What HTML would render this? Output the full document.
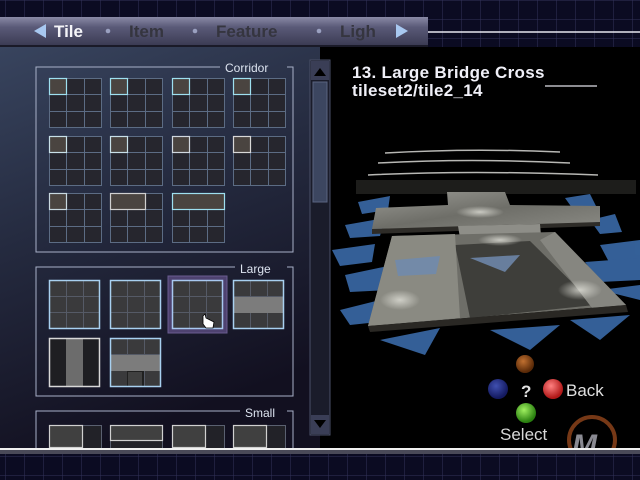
<!DOCTYPE html>
<html><head><meta charset="utf-8"><style>
html,body{margin:0;padding:0;background:#000;width:640px;height:480px;overflow:hidden}
svg{display:block}
text{font-family:"Liberation Sans",sans-serif}
</style></head><body>
<svg width="640" height="480" viewBox="0 0 640 480" xmlns="http://www.w3.org/2000/svg">
<defs>
<pattern id="grid" width="19" height="19" patternUnits="userSpaceOnUse" x="5" y="0">
<rect width="19" height="19" fill="#0b0b22"/>
<path d="M0 0V19M0 0H19" stroke="#33335a" stroke-width="1"/>
</pattern>
<linearGradient id="tab" x1="0" y1="0" x2="0" y2="1">
<stop offset="0" stop-color="#8a8aa6"/><stop offset="0.35" stop-color="#5a5a78"/><stop offset="1" stop-color="#3a3a52"/>
</linearGradient>
<linearGradient id="panel" x1="0" y1="0" x2="0.3" y2="1">
<stop offset="0" stop-color="#38445e"/><stop offset="0.45" stop-color="#252b40"/><stop offset="1" stop-color="#121020"/>
</linearGradient>
<linearGradient id="slab" x1="0" y1="0" x2="1" y2="1">
<stop offset="0" stop-color="#9a9a94"/><stop offset="0.5" stop-color="#6e6e68"/><stop offset="1" stop-color="#8a8a84"/>
</linearGradient>
<radialGradient id="spot" cx="0.5" cy="0.5" r="0.5"><stop offset="0" stop-color="#e0e0d8" stop-opacity="0.8"/><stop offset="1" stop-color="#e0e0d8" stop-opacity="0"/></radialGradient>
<radialGradient id="rb" cx="0.4" cy="0.35" r="0.6"><stop offset="0" stop-color="#ff8080"/><stop offset="1" stop-color="#b01818"/></radialGradient>
<radialGradient id="gb" cx="0.4" cy="0.35" r="0.6"><stop offset="0" stop-color="#a0f060"/><stop offset="1" stop-color="#2a8010"/></radialGradient>
<radialGradient id="bb" cx="0.4" cy="0.35" r="0.6"><stop offset="0" stop-color="#4050b0"/><stop offset="1" stop-color="#141a60"/></radialGradient>
<radialGradient id="ob" cx="0.4" cy="0.35" r="0.6"><stop offset="0" stop-color="#c07030"/><stop offset="1" stop-color="#5a2a08"/></radialGradient>
</defs>

<rect x="0" y="0" width="640" height="17" fill="url(#grid)"/>
<rect x="428" y="17" width="212" height="30" fill="url(#grid)"/>
<line x1="428" y1="32" x2="640" y2="32" stroke="#e8e8f0" stroke-width="1.5"/>
<rect x="0" y="17" width="428" height="29" fill="url(#tab)"/>
<rect x="0" y="45" width="428" height="2" fill="#1a1a28"/>
<polygon points="34,31 46,24 46,38" fill="#a8c8f0"/>
<text x="54" y="37" font-size="17" font-weight="bold" fill="#f4f4f8">Tile</text>
<circle cx="108" cy="31" r="2.3" fill="#9aa0c0"/>
<text x="129" y="37" font-size="17" font-weight="bold" fill="#35353f">Item</text>
<circle cx="195" cy="31" r="2.3" fill="#9aa0c0"/>
<text x="216" y="37" font-size="17" font-weight="bold" fill="#35353f">Feature</text>
<circle cx="319" cy="31" r="2.3" fill="#9aa0c0"/>
<text x="340" y="37" font-size="17" font-weight="bold" fill="#35353f">Ligh</text>
<polygon points="408,31 396,24 396,38" fill="#a8c8f0"/>

<rect x="0" y="47" width="320" height="402" fill="url(#panel)"/>
<rect x="310" y="60" width="20" height="375" fill="#1a1c2a" stroke="#4a5068" stroke-width="1"/>
<rect x="311" y="61" width="18" height="19" fill="#3a3e56"/>
<polygon points="314,76 320,68 326,76" fill="#000"/>
<rect x="313" y="82" width="14" height="120" fill="#3c4660" stroke="#5a6480"/>
<rect x="311" y="415" width="18" height="19" fill="#3a3e56"/>
<polygon points="314,420 320,428 326,420" fill="#000"/>

<path d="M220 67 H36 V252 H293 V67 H287" fill="none" stroke="#a8b0c8" stroke-width="1"/>
<text x="225" y="72" font-size="12" fill="#dde4f0">Corridor</text>
<g stroke="#5c6c84" stroke-width="1" fill="#26262e">
<g id="t"><rect x="49.5" y="78.5" width="52" height="49"/><path d="M66.5 78.5V127.5M84.5 78.5V127.5M49.5 94.5H101.5M49.5 111.5H101.5"/></g>
<use href="#t" x="61"/><use href="#t" x="123"/><use href="#t" x="184"/>
<use href="#t" y="58"/><use href="#t" x="61" y="58"/><use href="#t" x="123" y="58"/><use href="#t" x="184" y="58"/>
<use href="#t" y="115"/><use href="#t" x="61" y="115"/><use href="#t" x="123" y="115"/>
</g>
<g fill="#4a4440" stroke="#9ee0f0" stroke-width="1.2">
<rect x="49.5" y="78.5" width="17" height="16"/><rect x="110.5" y="78.5" width="17" height="16"/><rect x="172.5" y="78.5" width="17" height="16"/><rect x="233.5" y="78.5" width="17" height="16"/>
<rect x="49.5" y="136.5" width="17" height="16" stroke="#c8e0e8"/><rect x="110.5" y="136.5" width="17" height="16" stroke="#c8e0e8"/><rect x="172.5" y="136.5" width="17" height="16" stroke="#d0d8e0"/><rect x="233.5" y="136.5" width="17" height="16" stroke="#d8d8d8"/>
<rect x="49.5" y="193.5" width="17" height="16" stroke="#c8d8e0"/><rect x="110.5" y="193.5" width="35" height="16" stroke="#d0d0d0"/><rect x="172.5" y="193.5" width="52" height="16"/>
</g>

<path d="M235 267 H36 V396 H293 V267 H287" fill="none" stroke="#a8b0c8" stroke-width="1"/>
<text x="240" y="273" font-size="12" fill="#dde4f0">Large</text>
<rect x="168" y="276" width="59" height="57" fill="#4e4270" stroke="#6a5c90"/>
<g stroke="#555a66" stroke-width="1" fill="#3a3a3c">
<g id="L"><rect x="49.5" y="280.5" width="50" height="48"/><path d="M66.5 280.5V328.5M83.5 280.5V328.5M49.5 296.5H99.5M49.5 312.5H99.5"/></g>
<use href="#L" x="61"/><use href="#L" x="123"/><use href="#L" x="184"/>
<use href="#L" y="58"/><use href="#L" x="61" y="58"/>
</g>
<rect x="234" y="297" width="49" height="16" fill="#7c7c7c"/>
<rect x="50" y="339" width="49" height="47" fill="#1e1e22"/>
<rect x="66" y="339" width="17" height="47" fill="#6c6c6c"/>
<rect x="111" y="355" width="49" height="16" fill="#7c7c7c"/>
<rect x="127" y="371" width="17" height="15" fill="#202020"/>
<path d="M129 372V386M131 372V386M133 372V386M135 372V386M137 372V386M139 372V386M141 372V386" stroke="#606060"/>
<g fill="none" stroke-width="1.5">
<rect x="49.5" y="280.5" width="50" height="48" stroke="#a8d0f0"/>
<rect x="110.5" y="280.5" width="50" height="48" stroke="#a8d0f0"/>
<rect x="172.5" y="280.5" width="50" height="48" stroke="#a8c8f0"/>
<rect x="233.5" y="280.5" width="50" height="48" stroke="#a8d0f0"/>
<rect x="49.5" y="338.5" width="50" height="48" stroke="#d8d8d8"/>
<rect x="110.5" y="338.5" width="50" height="48" stroke="#a8d0f0"/>
</g>
<path d="M203 316 L203 324 L206 328 L213 328 L214 322 L206 318 L205 314 Z" fill="#fff" stroke="#000" stroke-width="0.8"/>

<path d="M240 411 H36 V449 M293 449 V411 H287" fill="none" stroke="#a8b0c8" stroke-width="1"/>
<text x="245" y="417" font-size="12" fill="#dde4f0">Small</text>
<g stroke="#5a6070" fill="#222228">
<rect x="49.5" y="425.5" width="52" height="24"/><rect x="110.5" y="425.5" width="52" height="24"/><rect x="172.5" y="425.5" width="52" height="24"/><rect x="233.5" y="425.5" width="52" height="24"/>
</g>
<g fill="#404040" stroke="#d0d0d0" stroke-width="1.2">
<rect x="49.5" y="425.5" width="33" height="22"/><rect x="110.5" y="425.5" width="52" height="15"/><rect x="172.5" y="425.5" width="33" height="22"/><rect x="233.5" y="425.5" width="33" height="22"/>
</g>

<text x="352" y="78" font-size="17" font-weight="bold" fill="#f0f0f8" letter-spacing="0.3">13. Large Bridge Cross</text>
<text x="352" y="96" font-size="17" font-weight="bold" fill="#f0f0f8" letter-spacing="0.3">tileset2/tile2_14</text>
<line x1="545" y1="86" x2="597" y2="86" stroke="#e0e0e8" stroke-width="1.2"/>

<g fill="#3a6aa8" opacity="0.9">
<polygon points="358,202 390,196 388,210 362,214"/>
<polygon points="345,225 385,218 380,236 350,238"/>
<polygon points="332,250 375,244 372,262 340,266"/>
<polygon points="345,275 388,266 390,290 350,292"/>
<polygon points="340,310 380,300 378,322 350,325"/>
<polygon points="380,340 440,328 425,355"/>
<polygon points="490,330 560,325 530,350"/>
<polygon points="570,320 630,315 600,340"/>
<polygon points="565,198 590,194 598,210 575,212"/>
<polygon points="590,220 615,214 622,232 600,234"/>
<polygon points="600,245 640,240 640,262 610,264"/>
<polygon points="585,262 640,258 640,280 600,282"/>
<polygon points="600,290 640,285 640,300"/>
</g>
<rect x="356" y="180" width="280" height="14" fill="#2a2926" opacity="0.7"/>
<g fill="none" stroke="#d8d8d4" stroke-width="1.5" opacity="0.85">
<path d="M385 153 Q470 148 560 152"/>
<path d="M378 163 Q470 158 570 163"/>
<path d="M368 175 Q470 170 598 175"/>
</g>
<polygon points="447,192 505,192 510,205 600,206 600,222 540,226 458,228 372,229 376,208 448,205" fill="url(#slab)"/>
<polygon points="372,229 600,222 600,226 372,234" fill="#2e2c28"/>
<polygon points="458,226 540,224 542,247 462,250" fill="#8e8e88"/>
<polygon points="392,236 555,232 626,305 368,326" fill="#6e6e68"/>
<polygon points="455,245 530,241 595,305 470,318" fill="#3e3e3a"/>
<polygon points="392,236 455,234 460,318 368,326" fill="#8a8a82"/>
<polygon points="540,240 555,232 626,305 592,308" fill="#868680"/>
<polygon points="368,326 626,305 628,312 370,332" fill="#2a2824"/>
<ellipse cx="400" cy="300" rx="20" ry="10" fill="url(#spot)"/>
<ellipse cx="580" cy="290" rx="22" ry="10" fill="url(#spot)"/>
<ellipse cx="480" cy="212" rx="24" ry="6" fill="url(#spot)"/>
<ellipse cx="500" cy="240" rx="22" ry="6" fill="url(#spot)"/>
<polygon points="395,260 440,256 436,274 398,276" fill="#6a8ab8" opacity="0.7"/>
<polygon points="470,258 520,255 505,272" fill="#7a9ac8" opacity="0.7"/>

<circle cx="525" cy="364" r="9" fill="url(#ob)"/>
<circle cx="498" cy="389" r="10" fill="url(#bb)"/>
<text x="521" y="397" font-size="17" font-weight="bold" fill="#e0e0e0">?</text>
<circle cx="553" cy="389" r="10" fill="url(#rb)"/>
<text x="566" y="396" font-size="17" fill="#e0e0e0">Back</text>
<circle cx="526" cy="413" r="10" fill="url(#gb)"/>
<text x="500" y="440" font-size="17" fill="#d8d8d8">Select</text>
<circle cx="592" cy="440" r="23" fill="none" stroke="#a85020" stroke-width="4" opacity="0.7"/>
<text x="572" y="455" font-size="30" font-style="italic" font-weight="bold" fill="#8a8a92" font-family="Liberation Serif,serif">M</text>

<rect x="0" y="448" width="640" height="2" fill="#f0f0f0"/>
<rect x="0" y="450" width="640" height="4" fill="#4a4a58"/>
<rect x="0" y="454" width="640" height="26" fill="url(#grid)"/>
</svg>
</body></html>
